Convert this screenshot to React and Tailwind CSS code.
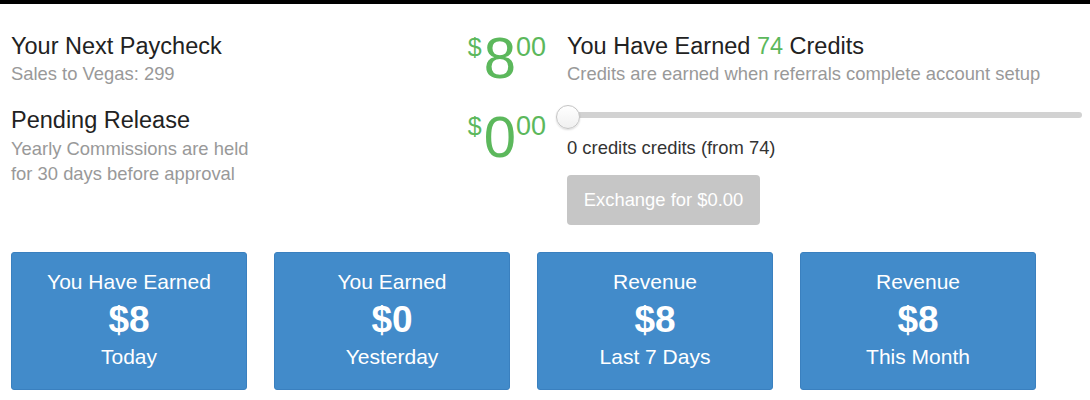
const cards = [
  { top: "You Have Earned", amount: "$8", bottom: "Today" },
  { top: "You Earned", amount: "$0", bottom: "Yesterday" },
  { top: "Revenue", amount: "$8", bottom: "Last 7 Days" },
  { top: "Revenue", amount: "$8", bottom: "This Month" },
];

function Money({ whole, offset }) {
  return (
    <div className={`flex items-start text-[#5cb85c] ${offset}`}>
      <span className="text-[25px] leading-none mt-[6px] mr-[2px]">$</span>
      <span className="text-[58px] leading-none">{whole}</span>
      <span className="text-[27px] leading-none mt-[5px]">00</span>
    </div>
  );
}

export default function App() {
  return (
    <div className="w-[1090px] h-[400px] bg-white font-['Liberation_Sans',Arial,sans-serif] overflow-hidden">
      <div className="h-1 bg-black" />

      <div className="grid grid-cols-[535px_1fr] gap-[21px] pl-[11px] pr-[8px] pt-[30px]">
        {/* left: paycheck + pending */}
        <div>
          <div className="flex justify-between items-start">
            <div>
              <h2 className="text-[23.5px] leading-[24px] text-[#222]">Your Next Paycheck</h2>
              <p className="text-[18.4px] leading-[24px] text-[#999] mt-1">Sales to Vegas: 299</p>
            </div>
            <Money whole="8" offset="-mt-[5px]" />
          </div>

          <div className="flex justify-between items-start mt-[21px]">
            <div>
              <h2 className="text-[23.5px] leading-[24px] text-[#222]">Pending Release</h2>
              <p className="text-[18.4px] leading-[25px] text-[#999] mt-1">
                Yearly Commissions are held
                <br />
                for 30 days before approval
              </p>
            </div>
            <Money whole="0" offset="mt-0" />
          </div>
        </div>

        {/* right: credits */}
        <div>
          <h2 className="text-[23.5px] leading-[24px] text-[#222]">
            You Have Earned <span className="text-[#5cb85c]">74</span> Credits
          </h2>
          <p className="text-[18.4px] leading-[24px] text-[#999] mt-1">
            Credits are earned when referrals complete account setup
          </p>

          <div className="relative h-[24px] mt-[19px]">
            <div className="absolute left-0 right-0 top-[7px] h-[6px] rounded-full bg-[#d2d2d2]" />
            <div className="absolute -left-[11px] top-0 w-[24px] h-[24px] rounded-full bg-gradient-to-b from-white to-[#f0f0f0] border border-[#c4c4c4] shadow-[0_1px_2px_rgba(0,0,0,0.15)]" />
          </div>

          <p className="text-[18.4px] leading-[24px] text-[#333] mt-[7px]">0 credits credits (from 74)</p>

          <button
            disabled
            className="mt-[15px] w-[193px] h-[50px] rounded-[4px] bg-[#c6c6c6] text-white text-[18.4px]"
          >
            Exchange for $0.00
          </button>
        </div>
      </div>

      <div className="flex gap-[27px] pl-[11px] mt-[27px]">
        {cards.map((c, i) => (
          <div
            key={i}
            className="w-[236px] h-[138px] rounded-[3px] bg-[#428bca] border border-[#3a80bf] text-white text-center pt-[15px]"
          >
            <div className="text-[21px] leading-[28px]">{c.top}</div>
            <div className="text-[37px] leading-[40px] font-bold mt-[4px]">{c.amount}</div>
            <div className="text-[21px] leading-[28px] mt-[3px]">{c.bottom}</div>
          </div>
        ))}
      </div>
    </div>
  );
}
